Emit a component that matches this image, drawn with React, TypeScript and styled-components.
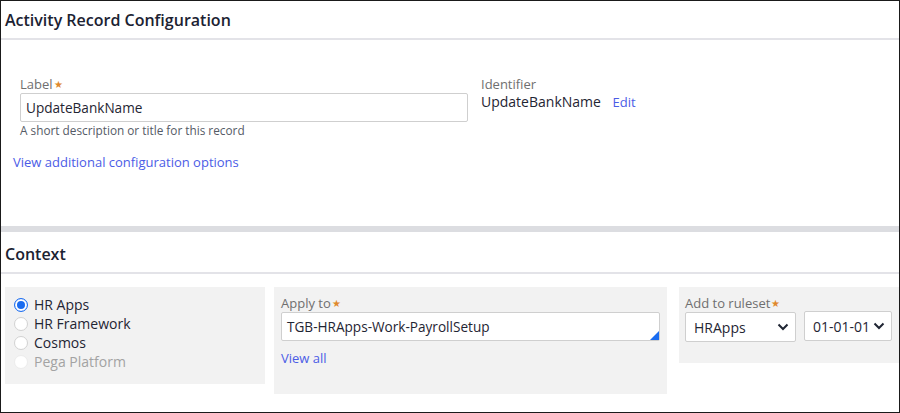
import React from 'react'
import styled, { createGlobalStyle } from 'styled-components'

const GlobalStyle = createGlobalStyle`
  html, body {
    margin: 0;
    padding: 0;
    background: #ffffff;
  }
  body {
    font-family: "Open Sans", "Noto Sans", sans-serif;
    color: #1f2533;
  }
  * {
    box-sizing: border-box;
  }
`

const Chevron = () => (
  <svg width="12" height="8" viewBox="0 0 12 8">
    <path d="M1.5 1.5 L6 6 L10.5 1.5" fill="none" stroke="#1f2533" strokeWidth="2" />
  </svg>
)

const App = () => {
  const contexts = [
    { name: 'HR Apps', checked: true, disabled: false },
    { name: 'HR Framework', checked: false, disabled: false },
    { name: 'Cosmos', checked: false, disabled: false },
    { name: 'Pega Platform', checked: false, disabled: true },
  ]

  return (
    <Frame>
      <GlobalStyle />
      <SectionHeader>Activity Record Configuration</SectionHeader>
      <ConfigBody>
        <FieldRow>
          <LabelField>
            <FieldLabel>
              Label<Star>★</Star>
            </FieldLabel>
            <TextInput>UpdateBankName</TextInput>
            <Helper>A short description or title for this record</Helper>
          </LabelField>
          <IdentifierField>
            <FieldLabel>Identifier</FieldLabel>
            <IdValue>
              UpdateBankName <Link>Edit</Link>
            </IdValue>
          </IdentifierField>
        </FieldRow>
        <MoreLink>View additional configuration options</MoreLink>
      </ConfigBody>
      <Band />
      <SectionHeader $tall>Context</SectionHeader>
      <Panels>
        <RadioPanel>
          {contexts.map((c) => (
            <RadioRow key={c.name} $disabled={c.disabled}>
              <Radio $checked={c.checked} $disabled={c.disabled} />
              {c.name}
            </RadioRow>
          ))}
        </RadioPanel>
        <ApplyPanel>
          <FieldLabel>
            Apply to<Star>★</Star>
          </FieldLabel>
          <AutoInput>TGB-HRApps-Work-PayrollSetup</AutoInput>
          <ViewAll>View all</ViewAll>
        </ApplyPanel>
        <RulesetPanel>
          <FieldLabel>
            Add to ruleset<Star>★</Star>
          </FieldLabel>
          <SelectRow>
            <Select $width={111}>
              HRApps
              <Chevron />
            </Select>
            <Select $width={88} $up>
              01-01-01
              <Chevron />
            </Select>
          </SelectRow>
        </RulesetPanel>
      </Panels>
    </Frame>
  )
}

export default App

const Frame = styled.div`
  width: 900px;
  height: 413px;
  border: 1px solid #1a1a1a;
  display: flex;
  flex-direction: column;
  overflow: hidden;
`

const SectionHeader = styled.div<{ $tall?: boolean }>`
  height: ${(p) => (p.$tall ? '42px' : '39px')};
  padding: ${(p) => (p.$tall ? '4px 4px 0' : '0 4px')};
  display: flex;
  align-items: center;
  font-size: 16px;
  font-weight: 600;
  color: #1b2232;
  border-bottom: 2px solid #e3e3e8;
`

const ConfigBody = styled.div`
  height: 186px;
  padding: 36px 0 0 12px;
`

const FieldRow = styled.div`
  display: flex;
  padding-left: 7px;
`

const LabelField = styled.div`
  width: 448px;
  display: flex;
  flex-direction: column;
`

const IdentifierField = styled.div`
  margin-left: 13px;
  display: flex;
  flex-direction: column;
`

const FieldLabel = styled.div`
  font-size: 13px;
  line-height: 17px;
  color: #6f6f6f;
  display: flex;
  align-items: center;
`

const Star = styled.span`
  color: #e0892c;
  font-size: 10px;
  margin-left: 1px;
`

const TextInput = styled.div`
  height: 29px;
  border: 1px solid #cfcfcf;
  border-radius: 2px;
  background: #fff;
  padding: 0 5px;
  display: flex;
  align-items: center;
  font-size: 13.6px;
  color: #1f2533;
`

const Helper = styled.div`
  font-size: 11.8px;
  color: #555b66;
`

const IdValue = styled.div`
  font-size: 14px;
  color: #1f2533;
  line-height: 18px;
`

const Link = styled.span`
  color: #4b5ce6;
  font-size: 13px;
  margin-left: 8px;
`

const MoreLink = styled.div`
  margin-top: 15px;
  font-size: 13px;
  color: #4b5ce6;
`

const Band = styled.div`
  height: 6px;
  background: #dcdde1;
`

const Panels = styled.div`
  display: flex;
  align-items: flex-start;
  padding: 13px 0 0 4px;
  gap: 9px;
`

const Panel = styled.div`
  background: #f2f2f2;
  padding: 8px 7px;
`

const RadioPanel = styled(Panel)`
  width: 260px;
  height: 97px;
  padding: 8px 9px;
  display: flex;
  flex-direction: column;
`

const RadioRow = styled.div<{ $disabled?: boolean }>`
  height: 19px;
  display: flex;
  align-items: center;
  font-size: 14px;
  color: ${(p) => (p.$disabled ? '#a3a3a3' : '#1f2533')};
`

const Radio = styled.span<{ $checked?: boolean; $disabled?: boolean }>`
  width: 14px;
  height: 14px;
  border-radius: 50%;
  margin-right: 6px;
  background: #fff;
  border: 1px solid
    ${(p) => (p.$checked ? '#1a6cf0' : p.$disabled ? '#ececec' : '#d2d2d2')};
  box-shadow: ${(p) => (p.$checked ? 'inset 0 0 0 2px #fff, inset 0 0 0 6px #1a6cf0' : 'none')};
`

const ApplyPanel = styled(Panel)`
  width: 393px;
  height: 107px;
  display: flex;
  flex-direction: column;
`

const AutoInput = styled(TextInput)`
  position: relative;
  &::after {
    content: '';
    position: absolute;
    right: 0;
    bottom: 0;
    border-style: solid;
    border-width: 0 0 9px 9px;
    border-color: transparent transparent #1a6cf0 transparent;
  }
`

const ViewAll = styled.div`
  margin-top: 8px;
  font-size: 13px;
  color: #4b5ce6;
`

const RulesetPanel = styled(Panel)`
  margin-left: 3px;
  flex: 1;
  height: 76px;
  padding: 8px 6px;
`

const SelectRow = styled.div`
  display: flex;
  align-items: flex-start;
  gap: 8px;
`

const Select = styled.div<{ $width: number; $up?: boolean }>`
  width: ${(p) => p.$width}px;
  height: 30px;
  margin-top: ${(p) => (p.$up ? '-1px' : '0')};
  background: #fff;
  border: 1px solid #cfcfcf;
  border-radius: 2px;
  padding: 0 6px 0 8px;
  display: flex;
  align-items: center;
  justify-content: space-between;
  font-size: 14px;
  color: #1f2533;
`
